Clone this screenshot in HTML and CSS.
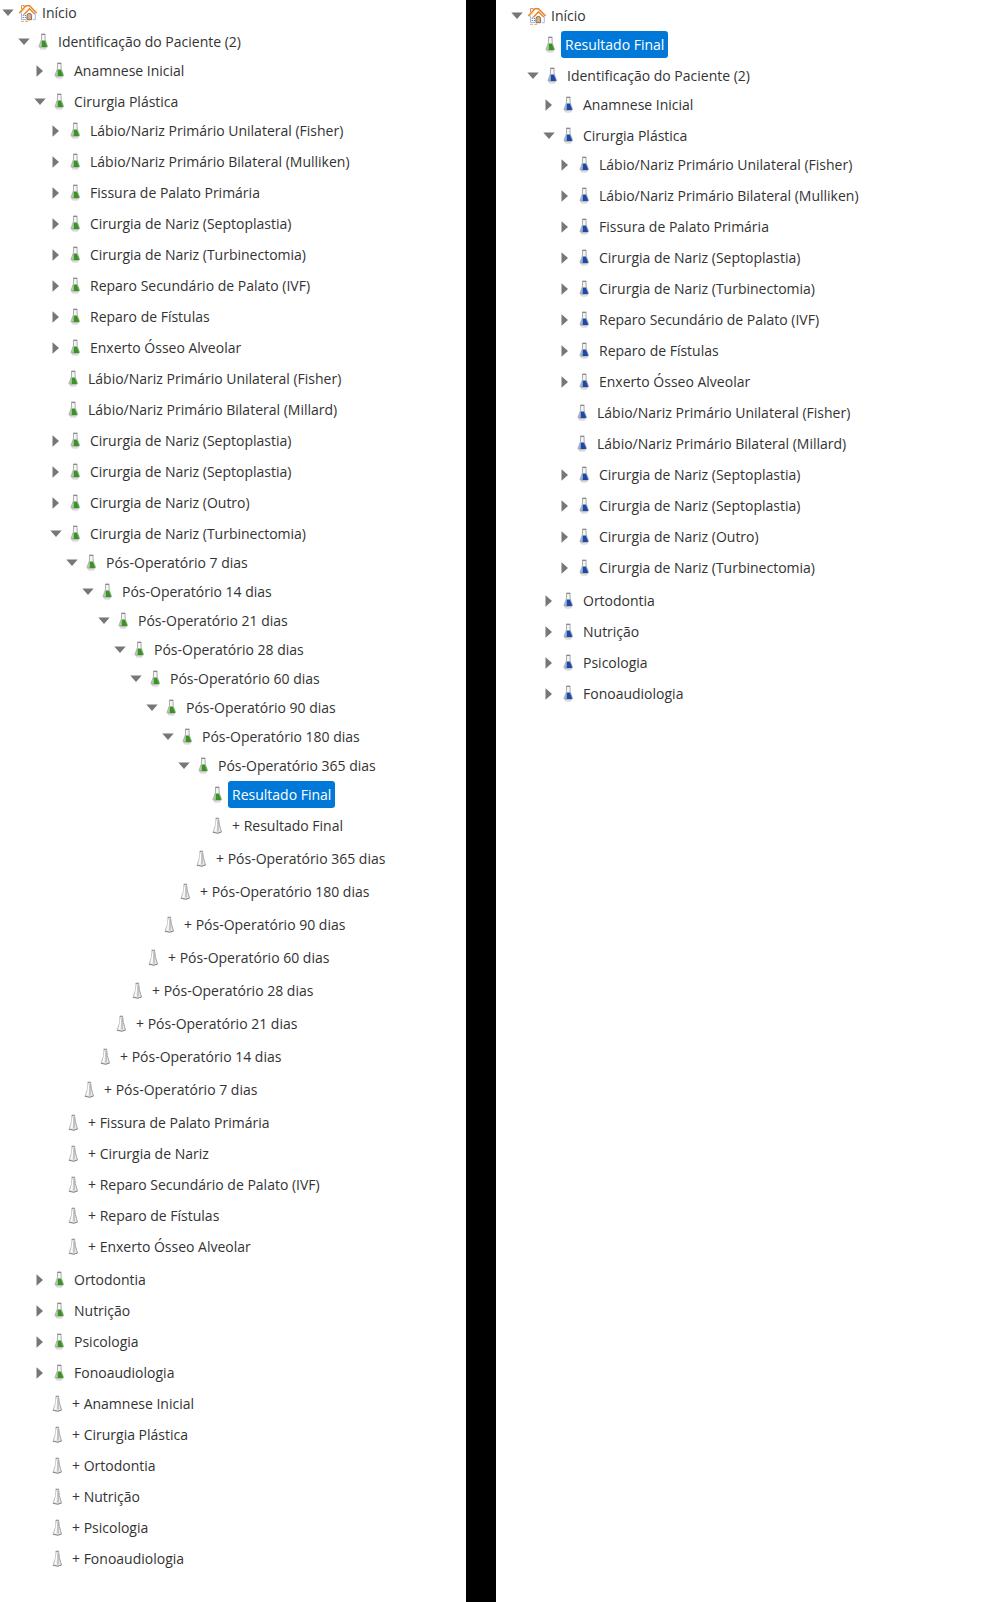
FILE: index.html
```html
<!DOCTYPE html>
<html lang="pt-BR">
<head>
<meta charset="utf-8">
<meta name="viewport" content="width=device-width, initial-scale=1">
<title>Identificação do Paciente</title>
<link rel="stylesheet" href="styles.css">
</head>
<body>
<svg class="sprite" aria-hidden="true">
  <symbol id="down" viewBox="0 0 16 16"><path d="M2.300 4.500h11.400L8 11z" fill="#777"/></symbol>
  <symbol id="right" viewBox="0 0 16 16"><path d="M4.500 2.300v11.400L11 8z" fill="#777"/></symbol>
  <symbol id="home" viewBox="0 0 20 18">
    <path d="M3 8 8 3h4l5.500 6v7H3z" fill="#fffdfa"/>
    <path d="M3.500 8.500v7H8M17.300 9.500v6.200H15" fill="none" stroke="#9bbcf0" stroke-width="1"/>
    <path d="M3.500 5V1.500h2.700V3" fill="#fff" stroke="#e0935a" stroke-width="1"/>
    <path d="M1.300 9 8 1.800h3.500L18.700 9" fill="none" stroke="#e8852b" stroke-width="1.500"/>
    <path d="M2.500 9.800 6.800 5.300" fill="none" stroke="#ffd3a0" stroke-width="1"/>
    <path d="M6.300 10.300 11.500 4.800l5.300 5.200" fill="none" stroke="#e8852b" stroke-width="1.500"/>
    <path d="M9 15.700v-4a2.300 2.300 0 0 1 4.600 0v4z" fill="#d3b190" stroke="#8a6a50" stroke-width="1"/>
    <path d="M4.700 10.500h1.200v1.300H4.700zM6.800 11h1.200v1H6.800zM4.700 12.900h1.200v1.200H4.700zM6.800 12.900h1.200v1.200H6.800z" fill="#3f7fd6"/>
    <path d="M3 17.300h3M7.200 17.300h3" stroke="#f2a24c" stroke-width="1"/>
  </symbol>
  <symbol id="flask" viewBox="0 0 20 18">
    <ellipse cx="9.200" cy="15.300" rx="3.500" ry="1.500" fill="#ddd"/>
    <path d="M7.600 1.500 7.400 7 5 13.200q-.3 1 .8 1h6.900q1.100 0 .8-1L11.200 7 11 1.500z" fill="#f4f4f4" stroke="#a5a5a5" stroke-width=".9"/>
    <path d="M7.700 7.500h3.200l2.200 5.600q.2.800-.6.800H7.700z" fill="currentColor"/>
    <path d="M7.700 7.500v6.400H6q-.8 0-.4-.8z" fill="currentColor" opacity=".4"/>
    <path d="M7.300 1.300h4" stroke="#888" stroke-width="1.300"/>
  </symbol>
  <symbol id="empty" viewBox="0 0 20 18">
    <path d="M8 1.200h2.600l.7 6 2.200 7.300-3.700 2-4.800-1.300L7.500 7.500z" fill="#e9e9e9"/>
    <path d="M8 1.500 7.500 8 5 15.200" fill="none" stroke="#bbb" stroke-width=".9"/>
    <path d="M10.600 1.500l.7 6 2.200 7.500" fill="none" stroke="#a5a5a5" stroke-width="1"/>
    <path d="M8.800 4 7.600 14" stroke="#fff" stroke-width="1.200"/>
    <path d="M10 3.500v11" stroke="#a0a0a0" stroke-width="1"/>
    <path d="M7.600 1.200h3.200M5 15.300l4.700 1 3.800-1.200" fill="none" stroke="#808080" stroke-width="1.100"/>
  </symbol>
</svg>
<main class="panes">
<nav class="pane pane-source" aria-label="Ficha do paciente">
<ul class="tree">
<li><div class="row"><button aria-label="Recolher"><svg><use href="#down"/></svg></button><svg class="icon"><use href="#home"/></svg><a href="#">Início</a></div>
<ul>
<li><div class="row"><button aria-label="Recolher"><svg><use href="#down"/></svg></button><svg class="icon"><use href="#flask"/></svg><a href="#">Identificação do Paciente (2)</a></div>
<ul>
<li><div class="row"><button aria-label="Expandir"><svg><use href="#right"/></svg></button><svg class="icon"><use href="#flask"/></svg><a href="#">Anamnese Inicial</a></div></li>
<li><div class="row"><button aria-label="Recolher"><svg><use href="#down"/></svg></button><svg class="icon"><use href="#flask"/></svg><a href="#">Cirurgia Plástica</a></div>
<ul>
<li><div class="row"><button aria-label="Expandir"><svg><use href="#right"/></svg></button><svg class="icon"><use href="#flask"/></svg><a href="#">Lábio/Nariz Primário Unilateral (Fisher)</a></div></li>
<li><div class="row"><button aria-label="Expandir"><svg><use href="#right"/></svg></button><svg class="icon"><use href="#flask"/></svg><a href="#">Lábio/Nariz Primário Bilateral (Mulliken)</a></div></li>
<li><div class="row"><button aria-label="Expandir"><svg><use href="#right"/></svg></button><svg class="icon"><use href="#flask"/></svg><a href="#">Fissura de Palato Primária</a></div></li>
<li><div class="row"><button aria-label="Expandir"><svg><use href="#right"/></svg></button><svg class="icon"><use href="#flask"/></svg><a href="#">Cirurgia de Nariz (Septoplastia)</a></div></li>
<li><div class="row"><button aria-label="Expandir"><svg><use href="#right"/></svg></button><svg class="icon"><use href="#flask"/></svg><a href="#">Cirurgia de Nariz (Turbinectomia)</a></div></li>
<li><div class="row"><button aria-label="Expandir"><svg><use href="#right"/></svg></button><svg class="icon"><use href="#flask"/></svg><a href="#">Reparo Secundário de Palato (IVF)</a></div></li>
<li><div class="row"><button aria-label="Expandir"><svg><use href="#right"/></svg></button><svg class="icon"><use href="#flask"/></svg><a href="#">Reparo de Fístulas</a></div></li>
<li><div class="row"><button aria-label="Expandir"><svg><use href="#right"/></svg></button><svg class="icon"><use href="#flask"/></svg><a href="#">Enxerto Ósseo Alveolar</a></div></li>
<li><div class="row leaf"><svg class="icon"><use href="#flask"/></svg><a href="#">Lábio/Nariz Primário Unilateral (Fisher)</a></div></li>
<li><div class="row leaf"><svg class="icon"><use href="#flask"/></svg><a href="#">Lábio/Nariz Primário Bilateral (Millard)</a></div></li>
<li><div class="row"><button aria-label="Expandir"><svg><use href="#right"/></svg></button><svg class="icon"><use href="#flask"/></svg><a href="#">Cirurgia de Nariz (Septoplastia)</a></div></li>
<li><div class="row"><button aria-label="Expandir"><svg><use href="#right"/></svg></button><svg class="icon"><use href="#flask"/></svg><a href="#">Cirurgia de Nariz (Septoplastia)</a></div></li>
<li><div class="row"><button aria-label="Expandir"><svg><use href="#right"/></svg></button><svg class="icon"><use href="#flask"/></svg><a href="#">Cirurgia de Nariz (Outro)</a></div></li>
<li><div class="row"><button aria-label="Recolher"><svg><use href="#down"/></svg></button><svg class="icon"><use href="#flask"/></svg><a href="#">Cirurgia de Nariz (Turbinectomia)</a></div>
<ul>
<li><div class="row"><button aria-label="Recolher"><svg><use href="#down"/></svg></button><svg class="icon"><use href="#flask"/></svg><a href="#">Pós-Operatório 7 dias</a></div>
<ul>
<li><div class="row"><button aria-label="Recolher"><svg><use href="#down"/></svg></button><svg class="icon"><use href="#flask"/></svg><a href="#">Pós-Operatório 14 dias</a></div>
<ul>
<li><div class="row"><button aria-label="Recolher"><svg><use href="#down"/></svg></button><svg class="icon"><use href="#flask"/></svg><a href="#">Pós-Operatório 21 dias</a></div>
<ul>
<li><div class="row"><button aria-label="Recolher"><svg><use href="#down"/></svg></button><svg class="icon"><use href="#flask"/></svg><a href="#">Pós-Operatório 28 dias</a></div>
<ul>
<li><div class="row"><button aria-label="Recolher"><svg><use href="#down"/></svg></button><svg class="icon"><use href="#flask"/></svg><a href="#">Pós-Operatório 60 dias</a></div>
<ul>
<li><div class="row"><button aria-label="Recolher"><svg><use href="#down"/></svg></button><svg class="icon"><use href="#flask"/></svg><a href="#">Pós-Operatório 90 dias</a></div>
<ul>
<li><div class="row"><button aria-label="Recolher"><svg><use href="#down"/></svg></button><svg class="icon"><use href="#flask"/></svg><a href="#">Pós-Operatório 180 dias</a></div>
<ul>
<li><div class="row"><button aria-label="Recolher"><svg><use href="#down"/></svg></button><svg class="icon"><use href="#flask"/></svg><a href="#">Pós-Operatório 365 dias</a></div>
<ul>
<li><div class="row leaf"><svg class="icon"><use href="#flask"/></svg><a href="#" class="selected" aria-current="true">Resultado Final</a></div></li>
<li><div class="row leaf"><svg class="icon"><use href="#empty"/></svg><a href="#">+ Resultado Final</a></div></li>
</ul></li>
<li><div class="row leaf"><svg class="icon"><use href="#empty"/></svg><a href="#">+ Pós-Operatório 365 dias</a></div></li>
</ul></li>
<li><div class="row leaf"><svg class="icon"><use href="#empty"/></svg><a href="#">+ Pós-Operatório 180 dias</a></div></li>
</ul></li>
<li><div class="row leaf"><svg class="icon"><use href="#empty"/></svg><a href="#">+ Pós-Operatório 90 dias</a></div></li>
</ul></li>
<li><div class="row leaf"><svg class="icon"><use href="#empty"/></svg><a href="#">+ Pós-Operatório 60 dias</a></div></li>
</ul></li>
<li><div class="row leaf"><svg class="icon"><use href="#empty"/></svg><a href="#">+ Pós-Operatório 28 dias</a></div></li>
</ul></li>
<li><div class="row leaf"><svg class="icon"><use href="#empty"/></svg><a href="#">+ Pós-Operatório 21 dias</a></div></li>
</ul></li>
<li><div class="row leaf"><svg class="icon"><use href="#empty"/></svg><a href="#">+ Pós-Operatório 14 dias</a></div></li>
</ul></li>
<li><div class="row leaf"><svg class="icon"><use href="#empty"/></svg><a href="#">+ Pós-Operatório 7 dias</a></div></li>
</ul></li>
<li><div class="row leaf"><svg class="icon"><use href="#empty"/></svg><a href="#">+ Fissura de Palato Primária</a></div></li>
<li><div class="row leaf"><svg class="icon"><use href="#empty"/></svg><a href="#">+ Cirurgia de Nariz</a></div></li>
<li><div class="row leaf"><svg class="icon"><use href="#empty"/></svg><a href="#">+ Reparo Secundário de Palato (IVF)</a></div></li>
<li><div class="row leaf"><svg class="icon"><use href="#empty"/></svg><a href="#">+ Reparo de Fístulas</a></div></li>
<li><div class="row leaf"><svg class="icon"><use href="#empty"/></svg><a href="#">+ Enxerto Ósseo Alveolar</a></div></li>
</ul></li>
<li><div class="row"><button aria-label="Expandir"><svg><use href="#right"/></svg></button><svg class="icon"><use href="#flask"/></svg><a href="#">Ortodontia</a></div></li>
<li><div class="row"><button aria-label="Expandir"><svg><use href="#right"/></svg></button><svg class="icon"><use href="#flask"/></svg><a href="#">Nutrição</a></div></li>
<li><div class="row"><button aria-label="Expandir"><svg><use href="#right"/></svg></button><svg class="icon"><use href="#flask"/></svg><a href="#">Psicologia</a></div></li>
<li><div class="row"><button aria-label="Expandir"><svg><use href="#right"/></svg></button><svg class="icon"><use href="#flask"/></svg><a href="#">Fonoaudiologia</a></div></li>
<li><div class="row leaf"><svg class="icon"><use href="#empty"/></svg><a href="#">+ Anamnese Inicial</a></div></li>
<li><div class="row leaf"><svg class="icon"><use href="#empty"/></svg><a href="#">+ Cirurgia Plástica</a></div></li>
<li><div class="row leaf"><svg class="icon"><use href="#empty"/></svg><a href="#">+ Ortodontia</a></div></li>
<li><div class="row leaf"><svg class="icon"><use href="#empty"/></svg><a href="#">+ Nutrição</a></div></li>
<li><div class="row leaf"><svg class="icon"><use href="#empty"/></svg><a href="#">+ Psicologia</a></div></li>
<li><div class="row leaf"><svg class="icon"><use href="#empty"/></svg><a href="#">+ Fonoaudiologia</a></div></li>
</ul></li>
</ul></li>
</ul>
</nav>
<nav class="pane pane-result" aria-label="Resultado">
<ul class="tree">
<li><div class="row"><button aria-label="Recolher"><svg><use href="#down"/></svg></button><svg class="icon"><use href="#home"/></svg><a href="#">Início</a></div>
<ul>
<li><div class="row leaf"><svg class="icon"><use href="#flask"/></svg><a href="#" class="selected" aria-current="true">Resultado Final</a></div></li>
<li class="readonly"><div class="row"><button aria-label="Recolher"><svg><use href="#down"/></svg></button><svg class="icon"><use href="#flask"/></svg><a href="#">Identificação do Paciente (2)</a></div>
<ul>
<li><div class="row"><button aria-label="Expandir"><svg><use href="#right"/></svg></button><svg class="icon"><use href="#flask"/></svg><a href="#">Anamnese Inicial</a></div></li>
<li><div class="row"><button aria-label="Recolher"><svg><use href="#down"/></svg></button><svg class="icon"><use href="#flask"/></svg><a href="#">Cirurgia Plástica</a></div>
<ul>
<li><div class="row"><button aria-label="Expandir"><svg><use href="#right"/></svg></button><svg class="icon"><use href="#flask"/></svg><a href="#">Lábio/Nariz Primário Unilateral (Fisher)</a></div></li>
<li><div class="row"><button aria-label="Expandir"><svg><use href="#right"/></svg></button><svg class="icon"><use href="#flask"/></svg><a href="#">Lábio/Nariz Primário Bilateral (Mulliken)</a></div></li>
<li><div class="row"><button aria-label="Expandir"><svg><use href="#right"/></svg></button><svg class="icon"><use href="#flask"/></svg><a href="#">Fissura de Palato Primária</a></div></li>
<li><div class="row"><button aria-label="Expandir"><svg><use href="#right"/></svg></button><svg class="icon"><use href="#flask"/></svg><a href="#">Cirurgia de Nariz (Septoplastia)</a></div></li>
<li><div class="row"><button aria-label="Expandir"><svg><use href="#right"/></svg></button><svg class="icon"><use href="#flask"/></svg><a href="#">Cirurgia de Nariz (Turbinectomia)</a></div></li>
<li><div class="row"><button aria-label="Expandir"><svg><use href="#right"/></svg></button><svg class="icon"><use href="#flask"/></svg><a href="#">Reparo Secundário de Palato (IVF)</a></div></li>
<li><div class="row"><button aria-label="Expandir"><svg><use href="#right"/></svg></button><svg class="icon"><use href="#flask"/></svg><a href="#">Reparo de Fístulas</a></div></li>
<li><div class="row"><button aria-label="Expandir"><svg><use href="#right"/></svg></button><svg class="icon"><use href="#flask"/></svg><a href="#">Enxerto Ósseo Alveolar</a></div></li>
<li><div class="row leaf"><svg class="icon"><use href="#flask"/></svg><a href="#">Lábio/Nariz Primário Unilateral (Fisher)</a></div></li>
<li><div class="row leaf"><svg class="icon"><use href="#flask"/></svg><a href="#">Lábio/Nariz Primário Bilateral (Millard)</a></div></li>
<li><div class="row"><button aria-label="Expandir"><svg><use href="#right"/></svg></button><svg class="icon"><use href="#flask"/></svg><a href="#">Cirurgia de Nariz (Septoplastia)</a></div></li>
<li><div class="row"><button aria-label="Expandir"><svg><use href="#right"/></svg></button><svg class="icon"><use href="#flask"/></svg><a href="#">Cirurgia de Nariz (Septoplastia)</a></div></li>
<li><div class="row"><button aria-label="Expandir"><svg><use href="#right"/></svg></button><svg class="icon"><use href="#flask"/></svg><a href="#">Cirurgia de Nariz (Outro)</a></div></li>
<li><div class="row"><button aria-label="Expandir"><svg><use href="#right"/></svg></button><svg class="icon"><use href="#flask"/></svg><a href="#">Cirurgia de Nariz (Turbinectomia)</a></div></li>
</ul></li>
<li><div class="row"><button aria-label="Expandir"><svg><use href="#right"/></svg></button><svg class="icon"><use href="#flask"/></svg><a href="#">Ortodontia</a></div></li>
<li><div class="row"><button aria-label="Expandir"><svg><use href="#right"/></svg></button><svg class="icon"><use href="#flask"/></svg><a href="#">Nutrição</a></div></li>
<li><div class="row"><button aria-label="Expandir"><svg><use href="#right"/></svg></button><svg class="icon"><use href="#flask"/></svg><a href="#">Psicologia</a></div></li>
<li><div class="row"><button aria-label="Expandir"><svg><use href="#right"/></svg></button><svg class="icon"><use href="#flask"/></svg><a href="#">Fonoaudiologia</a></div></li>
</ul></li>
</ul></li>
</ul>
</nav>
</main>
</body>
</html>
```

FILE: styles.css
```css
* {
  box-sizing: border-box;
}

body {
  margin: 0;
  background: #fff;
  color: #333;
  font-family: "Open Sans", "Noto Sans", sans-serif;
  font-size: 14px;
  line-height: 19px;
}

.sprite {
  display: none;
}

.panes {
  display: grid;
  grid-template-columns: 466fr 534fr;
  min-height: 100vh;
  overflow: hidden;
}

.pane-source {
  margin-top: -1px;
}

.pane-result {
  border-left: 30px solid #000;
  padding: 2px 0 0 13px;
}

ul {
  list-style: none;
  margin: 0;
  padding: 0;
}

ul ul {
  padding-left: 16px;
}

li {
  padding-bottom: 2px;
}

.row {
  display: flex;
  align-items: center;
  height: 27px;
  margin-bottom: 2px;
  color: #3a9422;
  white-space: nowrap;
}

.readonly .row {
  color: #1c48a8;
}

.row button {
  width: 16px;
  height: 16px;
  margin: 0 2px 0 0;
  padding: 0;
  border: 0;
  background: none;
  cursor: pointer;
}

.row button svg {
  display: block;
  width: 16px;
  height: 16px;
}

.row.leaf {
  padding-left: 16px;
}

.icon {
  flex: none;
  width: 20px;
  height: 18px;
}

.row a {
  padding: 4px;
  border-radius: 3px;
  color: #333;
  text-decoration: none;
}

.row a.selected {
  background: #0078d7;
  color: #fff;
}
```
